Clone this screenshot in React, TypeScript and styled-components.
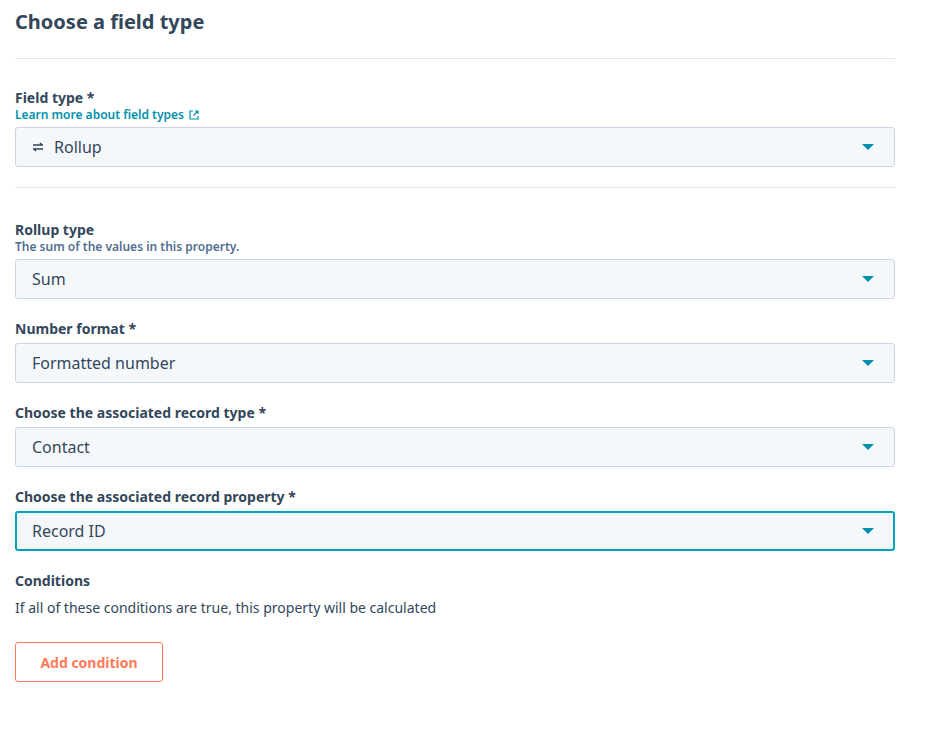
import React from "react";
import styled, { createGlobalStyle } from "styled-components";

const Global = createGlobalStyle`
  body { margin: 0; background: #fff; font-family: "Noto Sans", Inter, sans-serif; color: #33475b; }
`;

const Page = styled.div`
  width: 880px;
  padding: 0 0 0 15px;
`;
const Title = styled.h1`
  margin: 0;
  padding-top: 8px;
  height: 30px;
  font-size: 20px;
  font-weight: 700;
  line-height: 28px;
`;
const Divider = styled.hr<{ $mt: number; $mb: number }>`
  border: 0;
  border-top: 1px solid #dfe3eb;
  margin: ${(p) => p.$mt}px 0 ${(p) => p.$mb}px;
`;
const Field = styled.div`
  display: flex;
  flex-direction: column;
  margin-bottom: 20px;
`;
const Label = styled.div`
  font-size: 14px;
  font-weight: 700;
  line-height: 20px;
  margin-bottom: 4px;
`;
const Help = styled.div<{ $link?: boolean }>`
  font-size: 12px;
  font-weight: 600;
  line-height: 14px;
  margin-top: -4px;
  margin-bottom: 5px;
  color: ${(p) => (p.$link ? "#0091ae" : "#516f90")};
  display: flex;
  align-items: center;
  gap: 5px;
`;
const Select = styled.div<{ $focus?: boolean }>`
  height: 40px;
  box-sizing: border-box;
  background: #f5f8fa;
  border: ${(p) => (p.$focus ? "2px solid #00a4bd" : "1px solid #cbd6e2")};
  border-radius: 3px;
  display: flex;
  align-items: center;
  padding: 0 ${(p) => (p.$focus ? 15 : 16)}px;
  font-size: 16px;
  gap: 10px;
`;
const Value = styled.span`
  flex: 1;
`;
const Caret = styled.span`
  width: 0;
  height: 0;
  border-left: 6px solid transparent;
  border-right: 6px solid transparent;
  border-top: 6px solid #0091ae;
  margin-right: 4px;
`;
const Text = styled.div`
  font-size: 14px;
  line-height: 20px;
  margin-top: 7px;
`;
const Button = styled.button`
  margin-top: 24px;
  width: 148px;
  height: 40px;
  border: 1px solid #ff7a59;
  border-radius: 3px;
  background: #fff;
  color: #ff7a59;
  font-family: inherit;
  font-size: 14px;
  font-weight: 700;
`;

const Sel = ({ v, focus, icon }: { v: string; focus?: boolean; icon?: boolean }) => (
  <Select $focus={focus}>
    {icon && (
      <svg width="12" height="10" viewBox="0 0 12 10" fill="none" stroke="#33475b" strokeWidth="1.5">
        <path d="M1 3h10M8 1l2 2M11 7H1M4 9L2 7" />
      </svg>
    )}
    <Value>{v}</Value>
    <Caret />
  </Select>
);

export default function App() {
  return (
    <Page>
      <Global />
      <Title>Choose a field type</Title>
      <Divider $mt={20} $mb={29} />
      <Field>
        <Label>Field type *</Label>
        <Help $link>
          Learn more about field types
          <svg width="10" height="10" viewBox="0 0 10 10" fill="none" stroke="#0091ae" strokeWidth="1.2">
            <path d="M4 1H1v8h8V6M6 1h3v3M9 1L4.5 5.5" />
          </svg>
        </Help>
        <Sel v="Rollup" icon />
      </Field>
      <Divider $mt={4} $mb={32} />
      <Field>
        <Label>Rollup type</Label>
        <Help>The sum of the values in this property.</Help>
        <Sel v="Sum" />
      </Field>
      <Field>
        <Label>Number format *</Label>
        <Sel v="Formatted number" />
      </Field>
      <Field>
        <Label>Choose the associated record type *</Label>
        <Sel v="Contact" />
      </Field>
      <Field>
        <Label>Choose the associated record property *</Label>
        <Sel v="Record ID" focus />
      </Field>
      <Label>Conditions</Label>
      <Text>If all of these conditions are true, this property will be calculated</Text>
      <Button>Add condition</Button>
    </Page>
  );
}
